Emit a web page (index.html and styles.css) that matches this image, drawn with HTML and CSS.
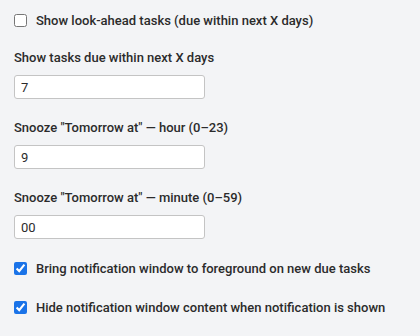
FILE: index.html
```html
<!DOCTYPE html>
<html>
<head>
    <title>Options</title>
    <link rel="stylesheet" href="styles.css">
</head>
<body>
    <main class="options">
        <label class="check-row">
            <input type="checkbox">
            <span>Show look-ahead tasks (due within next X days)</span>
        </label>

        <div class="field">
            <label class="field-label" for="days">Show tasks due within next X days</label>
            <input class="text-input" id="days" type="text" value="7">
        </div>

        <div class="field">
            <label class="field-label" for="hour">Snooze "Tomorrow at" — hour (0–23)</label>
            <input class="text-input" id="hour" type="text" value="9">
        </div>

        <div class="field">
            <label class="field-label" for="minute">Snooze "Tomorrow at" — minute (0–59)</label>
            <input class="text-input" id="minute" type="text" value="00">
        </div>

        <label class="check-row">
            <input type="checkbox" checked>
            <span>Bring notification window to foreground on new due tasks</span>
        </label>

        <label class="check-row">
            <input type="checkbox" checked>
            <span>Hide notification window content when notification is shown</span>
        </label>
    </main>
</body>
</html>
```

FILE: styles.css
```css
/* Page */
body {
    margin: 0;
    background: #f3f4f6;
    color: #2b2b2b;
    font-family: Roboto, "Liberation Sans", sans-serif;
    font-size: 13px;
}

.options {
    display: flex;
    flex-direction: column;
    padding: 11px 14px;
}

/* Checkbox rows */
.check-row {
    display: flex;
    align-items: center;
    gap: 9px;
    height: 18px;
    font-weight: 500;
    margin-bottom: 21px;
}

.check-row:first-child {
    margin-bottom: 20px;
}

.check-row input {
    width: 13px;
    height: 13px;
    margin: 0;
    accent-color: #1a73e8;
}

/* Text fields */
.field {
    display: flex;
    flex-direction: column;
    margin-bottom: 20px;
}

.field-label {
    line-height: 18px;
    font-weight: 500;
    margin-bottom: 8px;
}

.text-input {
    box-sizing: border-box;
    width: 191px;
    height: 24px;
    padding: 0 6px;
    border: 1px solid #c4c4c4;
    border-radius: 3px;
    background: #fff;
    color: #2b2b2b;
    font-family: inherit;
    font-size: 13px;
}
```
